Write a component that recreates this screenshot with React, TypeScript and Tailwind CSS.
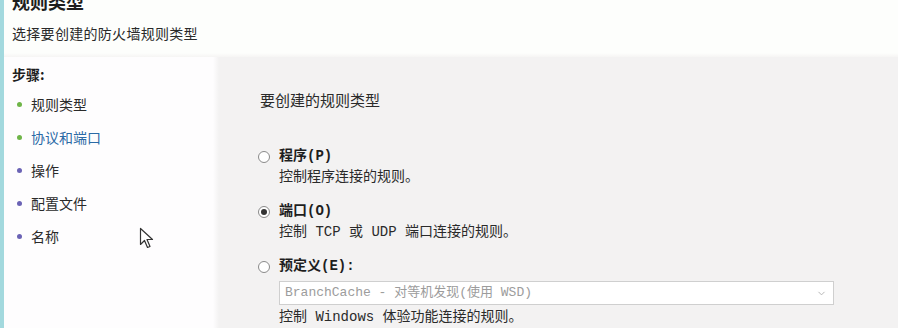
import { ChevronDown } from 'lucide-react';

const steps = [
    { label: '规则类型', dot: 'bg-[#6fb548]', text: 'text-[#2a2a2a]' },
    { label: '协议和端口', dot: 'bg-[#6fb548]', text: 'text-[#2b6aa6]' },
    { label: '操作', dot: 'bg-[#6b63b5]', text: 'text-[#2a2a2a]' },
    { label: '配置文件', dot: 'bg-[#6b63b5]', text: 'text-[#2a2a2a]' },
    { label: '名称', dot: 'bg-[#6b63b5]', text: 'text-[#2a2a2a]' },
];

function Radio({ checked }: { checked?: boolean }) {
    return (
        <span className="w-[12px] h-[12px] rounded-full border border-[#8a8a8a] bg-white flex items-center justify-center shrink-0">
            {checked && <span className="w-[6px] h-[6px] rounded-full bg-[#333]" />}
        </span>
    );
}

function Option({ label, desc, checked, children }: { label: string; desc: string; checked?: boolean; children?: React.ReactNode }) {
    return (
        <div>
            <div className="flex items-center gap-[9px] h-[21px]">
                <Radio checked={checked} />
                <span className="font-bold text-[14px] text-[#1e1e1e]">{label}</span>
            </div>
            {children}
            <div className="pl-[21px] h-[21px] leading-[21px] text-[14px] text-[#2a2a2a]">{desc}</div>
        </div>
    );
}

export default function App() {
    return (
        <div className="w-[898px] h-[335px] bg-white overflow-hidden relative" style={{ fontFamily: '"Noto Sans CJK SC", sans-serif' }}>
            <div className="flex h-[328px]">
                <div className="w-[4px] bg-[#a3d9de]" />
                <div className="flex-1 flex flex-col">
                    <div className="h-[53px] bg-[#fdfefc] pl-[8px]">
                        <div className="text-[18px] font-bold leading-[20px] mt-[-9px] text-[#1e1e1e]">规则类型</div>
                        <div className="text-[14px] leading-[20px] mt-[12px] text-[#2a2a2a] tracking-[0.3px]">选择要创建的防火墙规则类型</div>
                    </div>
                    <div className="h-[4px] bg-gradient-to-b from-[#fdfefc] to-[#f6f5f4]" />
                    <div className="flex flex-1">
                        <div className="w-[209px] bg-[#fefdfe] pt-[7px] pl-[8px]">
                            <div className="h-[20px] leading-[20px] text-[14px] font-bold text-[#1e1e1e]">步骤:</div>
                            <div className="mt-[4px]">
                                {steps.map(s => (
                                    <div key={s.label} className="h-[33px] flex items-center">
                                        <span className={`w-[5px] h-[5px] rounded-full ml-[5px] ${s.dot}`} />
                                        <span className={`ml-[9px] text-[14px] ${s.text}`}>{s.label}</span>
                                    </div>
                                ))}
                            </div>
                        </div>
                        <div className="w-[6px] bg-gradient-to-r from-[#fefdfe] to-[#f3f2f2]" />
                        <div className="flex-1 bg-[#f3f2f2] pt-[33px] pl-[39px]">
                            <div className="h-[20px] leading-[20px] text-[15px] text-[#2a2a2a] pl-[2px]">要创建的规则类型</div>
                            <div className="mt-[36px]" style={{ fontFamily: '"Liberation Mono", "Noto Sans CJK SC", monospace' }}>
                                <Option label="程序(P)" desc="控制程序连接的规则。" />
                                <div className="mt-[13px]">
                                    <Option label="端口(O)" desc="控制 TCP 或 UDP 端口连接的规则。" checked />
                                </div>
                                <div className="mt-[13px]">
                                    <Option label="预定义(E):" desc="控制 Windows 体验功能连接的规则。">
                                        <div className="ml-[21px] mt-[4px] w-[555px] h-[24px] bg-white border border-[#cfcfcf] flex items-center justify-between pl-[5px] pr-[6px] mb-[2px]">
                                            <span className="text-[13px] text-[#9c9c9c]">BranchCache - 对等机发现(使用 WSD)</span>
                                            <ChevronDown className="w-[11px] h-[11px] text-[#b0b0b0]" strokeWidth={2} />
                                        </div>
                                    </Option>
                                </div>
                            </div>
                        </div>
                    </div>
                </div>
            </div>
            <svg className="absolute left-[139px] top-[227px]" width="16" height="23" viewBox="0 0 16 23">
                <path d="M1.5 1.5 L1.5 17.5 L5.5 13.5 L8.5 20.5 L11 19.5 L8 12.5 L13.5 12.5 Z" fill="white" stroke="#333" strokeWidth="1.2" strokeLinejoin="round" />
            </svg>
        </div>
    );
}
